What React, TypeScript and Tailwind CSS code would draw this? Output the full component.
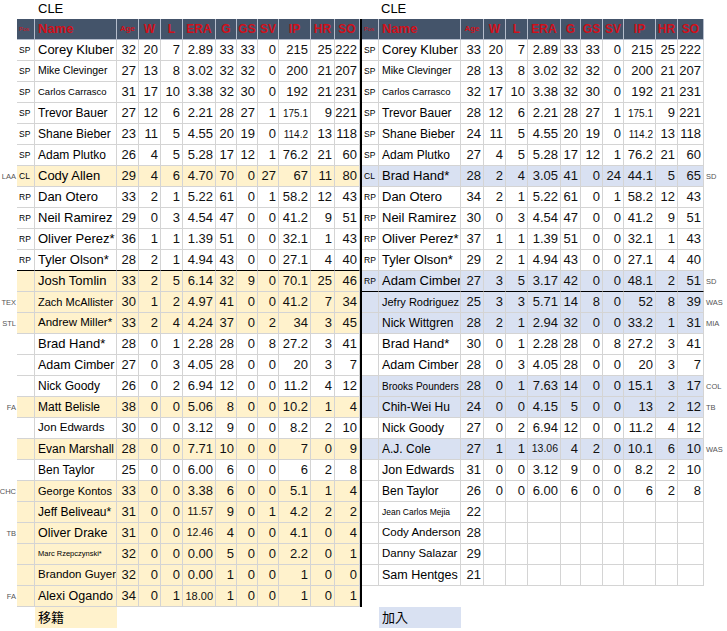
type Row = {
  pos?: string;
  name: string;
  ns?: string;
  s: string[];
  team?: string;
  hl?: boolean;
  sm?: Record<number, string>;
  line?: boolean;
};

const LEFT: Row[] = [
  { pos: "SP", name: "Corey Kluber", s: ["32", "20", "7", "2.89", "33", "33", "0", "215", "25", "222"] },
  { pos: "SP", name: "Mike Clevinger", ns: "text-[10.5px]", s: ["27", "13", "8", "3.02", "32", "32", "0", "200", "21", "207"] },
  { pos: "SP", name: "Carlos Carrasco", ns: "text-[9.5px]", s: ["31", "17", "10", "3.38", "32", "30", "0", "192", "21", "231"] },
  { pos: "SP", name: "Trevor Bauer", ns: "text-[12px]", s: ["27", "12", "6", "2.21", "28", "27", "1", "175.1", "9", "221"], sm: { 7: "text-[10px]" } },
  { pos: "SP", name: "Shane Bieber", ns: "text-[12px]", s: ["23", "11", "5", "4.55", "20", "19", "0", "114.2", "13", "118"], sm: { 7: "text-[10px]" } },
  { pos: "SP", name: "Adam Plutko", ns: "text-[12px]", s: ["26", "4", "5", "5.28", "17", "12", "1", "76.2", "21", "60"] },
  { pos: "CL", name: "Cody Allen", team: "LAA", hl: true, s: ["29", "4", "6", "4.70", "70", "0", "27", "67", "11", "80"] },
  { pos: "RP", name: "Dan Otero", s: ["33", "2", "1", "5.22", "61", "0", "1", "58.2", "12", "43"] },
  { pos: "RP", name: "Neil Ramirez", s: ["29", "0", "3", "4.54", "47", "0", "0", "41.2", "9", "51"] },
  { pos: "RP", name: "Oliver Perez*", s: ["36", "1", "1", "1.39", "51", "0", "0", "32.1", "1", "43"] },
  { pos: "RP", name: "Tyler Olson*", line: true, s: ["28", "2", "1", "4.94", "43", "0", "0", "27.1", "4", "40"] },
  { name: "Josh Tomlin", hl: true, s: ["33", "2", "5", "6.14", "32", "9", "0", "70.1", "25", "46"] },
  { name: "Zach McAllister", ns: "text-[11px]", team: "TEX", hl: true, s: ["30", "1", "2", "4.97", "41", "0", "0", "41.2", "7", "34"] },
  { name: "Andrew Miller*", ns: "text-[11.5px]", team: "STL", hl: true, s: ["33", "2", "4", "4.24", "37", "0", "2", "34", "3", "45"] },
  { name: "Brad Hand*", s: ["28", "0", "1", "2.28", "28", "0", "8", "27.2", "3", "41"] },
  { name: "Adam Cimber", ns: "text-[12.5px]", s: ["27", "0", "3", "4.05", "28", "0", "0", "20", "3", "7"] },
  { name: "Nick Goody", ns: "text-[12px]", s: ["26", "0", "2", "6.94", "12", "0", "0", "11.2", "4", "12"] },
  { name: "Matt Belisle", ns: "text-[12px]", team: "FA", hl: true, s: ["38", "0", "0", "5.06", "8", "0", "0", "10.2", "1", "4"] },
  { name: "Jon Edwards", ns: "text-[11.5px]", s: ["30", "0", "0", "3.12", "9", "0", "0", "8.2", "2", "10"] },
  { name: "Evan Marshall", ns: "text-[12px]", hl: true, s: ["28", "0", "0", "7.71", "10", "0", "0", "7", "0", "9"] },
  { name: "Ben Taylor", ns: "text-[12px]", s: ["25", "0", "0", "6.00", "6", "0", "0", "6", "2", "8"] },
  { name: "George Kontos", ns: "text-[11px]", team: "CHC", hl: true, s: ["33", "0", "0", "3.38", "6", "0", "0", "5.1", "1", "4"] },
  { name: "Jeff Beliveau*", ns: "text-[12px]", hl: true, s: ["31", "0", "0", "11.57", "9", "0", "1", "4.2", "2", "2"], sm: { 3: "text-[10.5px]" } },
  { name: "Oliver Drake", ns: "text-[12.5px]", team: "TB", hl: true, s: ["31", "0", "0", "12.46", "4", "0", "0", "4.1", "0", "4"], sm: { 3: "text-[10.5px]" } },
  { name: "Marc Rzepczynski*", ns: "text-[7.5px]", hl: true, s: ["32", "0", "0", "0.00", "5", "0", "0", "2.2", "0", "1"] },
  { name: "Brandon Guyer", ns: "text-[11.5px]", hl: true, s: ["32", "0", "0", "0.00", "1", "0", "0", "1", "0", "0"] },
  { name: "Alexi Ogando", ns: "text-[12.5px]", team: "FA", hl: true, s: ["34", "0", "1", "18.00", "1", "0", "0", "1", "0", "1"], sm: { 3: "text-[11px]" } },
];

const RIGHT: Row[] = [
  { pos: "SP", name: "Corey Kluber", s: ["33", "20", "7", "2.89", "33", "33", "0", "215", "25", "222"] },
  { pos: "SP", name: "Mike Clevinger", ns: "text-[10.5px]", s: ["28", "13", "8", "3.02", "32", "32", "0", "200", "21", "207"] },
  { pos: "SP", name: "Carlos Carrasco", ns: "text-[9.5px]", s: ["32", "17", "10", "3.38", "32", "30", "0", "192", "21", "231"] },
  { pos: "SP", name: "Trevor Bauer", ns: "text-[12px]", s: ["28", "12", "6", "2.21", "28", "27", "1", "175.1", "9", "221"], sm: { 7: "text-[10px]" } },
  { pos: "SP", name: "Shane Bieber", ns: "text-[12px]", s: ["24", "11", "5", "4.55", "20", "19", "0", "114.2", "13", "118"], sm: { 7: "text-[10px]" } },
  { pos: "SP", name: "Adam Plutko", ns: "text-[12px]", s: ["27", "4", "5", "5.28", "17", "12", "1", "76.2", "21", "60"] },
  { pos: "CL", name: "Brad Hand*", team: "SD", hl: true, s: ["28", "2", "4", "3.05", "41", "0", "24", "44.1", "5", "65"] },
  { pos: "RP", name: "Dan Otero", s: ["34", "2", "1", "5.22", "61", "0", "1", "58.2", "12", "43"] },
  { pos: "RP", name: "Neil Ramirez", s: ["30", "0", "3", "4.54", "47", "0", "0", "41.2", "9", "51"] },
  { pos: "RP", name: "Oliver Perez*", s: ["37", "1", "1", "1.39", "51", "0", "0", "32.1", "1", "43"] },
  { pos: "RP", name: "Tyler Olson*", s: ["29", "2", "1", "4.94", "43", "0", "0", "27.1", "4", "40"] },
  { pos: "RP", name: "Adam Cimber", team: "SD", hl: true, line: true, s: ["27", "3", "5", "3.17", "42", "0", "0", "48.1", "2", "51"] },
  { name: "Jefry Rodriguez", ns: "text-[11px]", team: "WAS", hl: true, s: ["25", "3", "3", "5.71", "14", "8", "0", "52", "8", "39"] },
  { name: "Nick Wittgren", ns: "text-[12px]", team: "MIA", hl: true, s: ["28", "2", "1", "2.94", "32", "0", "0", "33.2", "1", "31"] },
  { name: "Brad Hand*", s: ["30", "0", "1", "2.28", "28", "0", "8", "27.2", "3", "41"] },
  { name: "Adam Cimber", ns: "text-[12.5px]", s: ["28", "0", "3", "4.05", "28", "0", "0", "20", "3", "7"] },
  { name: "Brooks Pounders", ns: "text-[10px]", team: "COL", hl: true, s: ["28", "0", "1", "7.63", "14", "0", "0", "15.1", "3", "17"] },
  { name: "Chih-Wei Hu", ns: "text-[12px]", team: "TB", hl: true, s: ["24", "0", "0", "4.15", "5", "0", "0", "13", "2", "12"] },
  { name: "Nick Goody", ns: "text-[12px]", s: ["27", "0", "2", "6.94", "12", "0", "0", "11.2", "4", "12"] },
  { name: "A.J. Cole", ns: "text-[12px]", team: "WAS", hl: true, s: ["27", "1", "1", "13.06", "4", "2", "0", "10.1", "6", "10"], sm: { 3: "text-[10.5px]" } },
  { name: "Jon Edwards", ns: "text-[12.5px]", s: ["31", "0", "0", "3.12", "9", "0", "0", "8.2", "2", "10"] },
  { name: "Ben Taylor", ns: "text-[12px]", s: ["26", "0", "0", "6.00", "6", "0", "0", "6", "2", "8"] },
  { name: "Jean Carlos Mejia", ns: "text-[8.5px]", s: ["22", "", "", "", "", "", "", "", "", ""] },
  { name: "Cody Anderson", ns: "text-[11.5px]", s: ["28", "", "", "", "", "", "", "", "", ""] },
  { name: "Danny Salazar", ns: "text-[11.5px]", s: ["29", "", "", "", "", "", "", "", "", ""] },
  { name: "Sam Hentges", ns: "text-[12.5px]", s: ["21", "", "", "", "", "", "", "", "", ""] },
];

const HEAD = ["W", "L", "ERA", "G", "GS", "SV", "IP", "HR", "SO"];

function HeaderCells() {
  const hc = "h-[21px] flex items-center border-r border-b border-[#b4bccb] bg-[#44546a] text-[#d0101a] font-bold";
  return (
    <>
      <div className={`${hc} pl-[2px] text-[6px] font-normal`}>Pos</div>
      <div className={`${hc} pl-[3px] text-[13px]`}>Name</div>
      <div className={`${hc} justify-center text-[8px]`}>Age</div>
      {HEAD.map((h) => (
        <div key={h} className={`${hc} justify-center text-[12px]`}>
          {h}
        </div>
      ))}
    </>
  );
}

function Cells({ r, side }: { r: Row; side: "left" | "right" }) {
  const bg = r.hl ? (side === "left" ? "bg-[#fff2cc]" : "bg-[#d9e1f2]") : "bg-white";
  const bb = r.line ? "border-b-black" : "border-b-[#d4d4d4]";
  const cell = `h-[21px] flex items-center border-r border-b border-r-[#d4d4d4] ${bb} ${bg} whitespace-nowrap overflow-hidden`;
  return (
    <>
      <div className={`${cell} pl-[2px] text-[8.5px] text-black`}>{r.pos}</div>
      <div className={`${cell} pl-[3px] text-black ${r.ns ?? "text-[13px]"}`}>{r.name}</div>
      {r.s.map((v, i) => (
        <div key={i} className={`${cell} justify-end pr-[2px] text-[#111] ${r.sm?.[i] ?? "text-[13px]"}`}>
          {v}
        </div>
      ))}
    </>
  );
}

function Team({ t, side }: { t?: string; side: "left" | "right" }) {
  return (
    <div
      className={`h-[21px] flex items-center whitespace-nowrap text-[7.5px] text-[#555] ${
        side === "left" ? "justify-end pr-[1px]" : "pl-[2px]"
      }`}
    >
      {t}
    </div>
  );
}

export default function App() {
  const font = "font-['Liberation_Sans','Noto_Sans_CJK_JP',sans-serif]";
  return (
    <div className={`w-[727px] h-[631px] bg-white overflow-hidden flex ${font}`}>
      {/* transfers out */}
      <div className="w-[360px] flex flex-col">
        <div className="h-[19px] pl-[38px] text-[13px] leading-[17px] text-black">CLE</div>
        <div className="grid grid-cols-[17px_18px_82px_22px_22px_22px_33px_21px_21px_21px_32px_24px_25px]">
          <div />
          <HeaderCells />
          {LEFT.map((r) => (
            <div key={r.name + r.s[0]} className="contents">
              <Team t={r.team} side="left" />
              <Cells r={r} side="left" />
            </div>
          ))}
        </div>
        <div className="flex">
          <div className="w-[35px]" />
          <div className="w-[82px] h-[21px] bg-[#fff2cc] pl-[3px] flex items-center text-[13px] text-black">移籍</div>
        </div>
      </div>

      <div className="mt-[19px] h-[588px] w-[2px] bg-black" />

      {/* transfers in */}
      <div className="w-[365px] flex flex-col">
        <div className="h-[19px] pl-[19px] text-[13px] leading-[17px] text-black">CLE</div>
        <div className="grid grid-cols-[17px_82px_23px_22px_22px_33px_20px_22px_21px_32px_22px_26px_23px]">
          <HeaderCells />
          <div />
          {RIGHT.map((r) => (
            <div key={r.name + r.s[0]} className="contents">
              <Cells r={r} side="right" />
              <Team t={r.team} side="right" />
            </div>
          ))}
        </div>
        <div className="flex mt-[21px]">
          <div className="w-[17px]" />
          <div className="w-[82px] h-[21px] bg-[#d9e1f2] pl-[3px] flex items-center text-[13px] text-black">加入</div>
        </div>
      </div>
    </div>
  );
}
